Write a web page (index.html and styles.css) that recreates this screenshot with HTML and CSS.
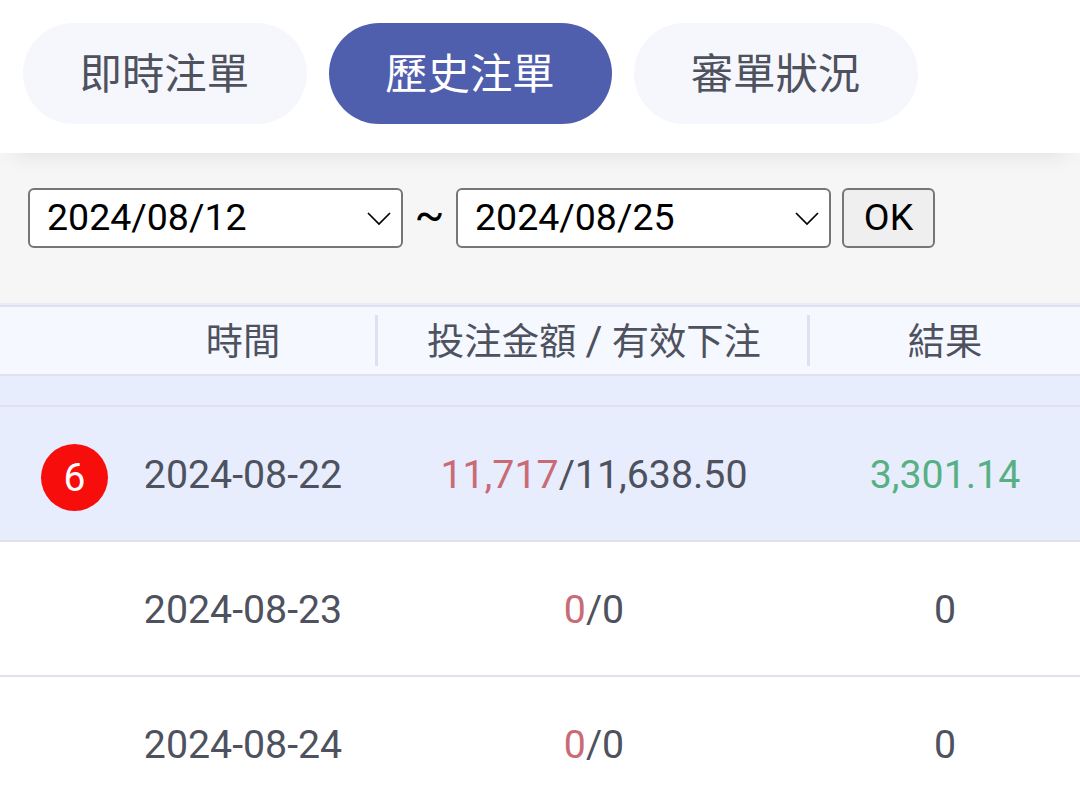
FILE: index.html
```html
<!DOCTYPE html>
<html lang="zh-Hant">
  <head>
    <meta charset="UTF-8" />
    <meta name="viewport" content="width=device-width, initial-scale=1.0" />
    <title>歷史注單</title>
    <link rel="stylesheet" href="styles.css">
  </head>
  <body>
    <nav class="tabs">
      <button class="tab">即時注單</button>
      <button class="tab active">歷史注單</button>
      <button class="tab">審單狀況</button>
    </nav>

    <div class="filter">
      <div class="date">
        <select>
          <option>2024/08/12</option>
        </select>
        <svg class="arrow" width="24" height="14" viewBox="0 0 24 14">
          <path d="M1 1 L12 12 L23 1" />
        </svg>
      </div>
      <span class="tilde">~</span>
      <div class="date">
        <select>
          <option>2024/08/25</option>
        </select>
        <svg class="arrow" width="24" height="14" viewBox="0 0 24 14">
          <path d="M1 1 L12 12 L23 1" />
        </svg>
      </div>
      <button class="ok">OK</button>
    </div>

    <div class="table">
      <div class="row head">
        <div class="time">時間</div>
        <div class="line">投注金額 <span class="slash">/</span> 有效下注</div>
        <div class="line">結果</div>
      </div>
      <div class="row spacer"></div>
      <div class="row selected">
        <div class="count"><span class="badge">6</span></div>
        <div>2024-08-22</div>
        <div><span class="red">11,717</span>/11,638.50</div>
        <div class="green">3,301.14</div>
      </div>
      <div class="row">
        <div class="count"></div>
        <div>2024-08-23</div>
        <div><span class="red">0</span>/0</div>
        <div>0</div>
      </div>
      <div class="row">
        <div class="count"></div>
        <div>2024-08-24</div>
        <div><span class="red">0</span>/0</div>
        <div>0</div>
      </div>
    </div>
  </body>
</html>
```

FILE: styles.css
```css
* {
  box-sizing: border-box;
}
body {
  margin: 0;
  height: 802px;
  overflow: hidden;
  background: #f6f6f6;
  color: #4e515e;
  font-family: Roboto, "Noto Sans CJK TC", sans-serif;
}
button,
select {
  font-family: inherit;
  margin: 0;
}

.tabs {
  display: flex;
  gap: 22px;
  height: 153px;
  padding: 23px;
  background: #fff;
  box-shadow: 0 14px 22px -14px rgba(0, 0, 0, 0.11);
}
.tab {
  width: 283.6px;
  height: 101px;
  padding: 0 1px 7px 0;
  border: 0;
  border-radius: 51px;
  background: #f6f7fc;
  color: #4e515e;
  font-size: 42.4px;
}
.tab.active {
  background: #505eae;
  color: #fff;
}

.filter {
  display: flex;
  height: 150px;
  padding: 35px 28px;
  color: #000;
}
.date {
  position: relative;
  width: 375px;
  height: 60px;
}
.date select {
  appearance: none;
  width: 100%;
  height: 100%;
  padding: 0 17px 2px;
  border: 2px solid #767676;
  border-radius: 6px;
  background: #fff;
  color: #000;
  font-size: 37.5px;
}
.arrow {
  position: absolute;
  right: 12px;
  top: 24px;
  fill: none;
  stroke: #000;
  stroke-width: 1.7;
}
.tilde {
  width: 53px;
  text-align: center;
  font-size: 44px;
  line-height: 55px;
}
.ok {
  width: 93px;
  height: 60px;
  margin-left: 11px;
  padding: 0 0 2px;
  border: 2px solid #767676;
  border-radius: 6px;
  background: #efefef;
  color: #000;
  font-size: 37.5px;
}

.table {
  border-top: 2px solid #e9ebf7;
}
.row {
  display: grid;
  grid-template-columns: 108px 270px 432px 270px;
  align-items: center;
  height: 135px;
  padding-top: 2px;
  border-bottom: 2px solid #dfe2ea;
  background: #fff;
  text-align: center;
  font-size: 39.3px;
}
.head {
  height: 71px;
  padding-top: 0;
  border-top: 2px solid #dfe1f0;
  background: #f5f8fe;
  font-size: 37.3px;
}
.head div {
  height: 51px;
  line-height: 54px;
}
.head .time {
  grid-column: 2;
}
.head .line {
  position: relative;
}
.head .line::before {
  content: "";
  position: absolute;
  left: -3px;
  top: 0;
  width: 3px;
  height: 51px;
  background: #dfe2ee;
}
.slash {
  font-size: 41px;
  line-height: 1;
}
.spacer {
  height: 31px;
  background: #e7edfd;
}
.selected {
  background: #e7edfd;
}
.badge {
  display: block;
  width: 67px;
  height: 67px;
  margin: 6px 0 0 41px;
  border-radius: 50%;
  background: #f80d0d;
  color: #fff;
  font-size: 39px;
  line-height: 69px;
}
.red {
  color: #c96a76;
}
.green {
  color: #57b083;
}
```
